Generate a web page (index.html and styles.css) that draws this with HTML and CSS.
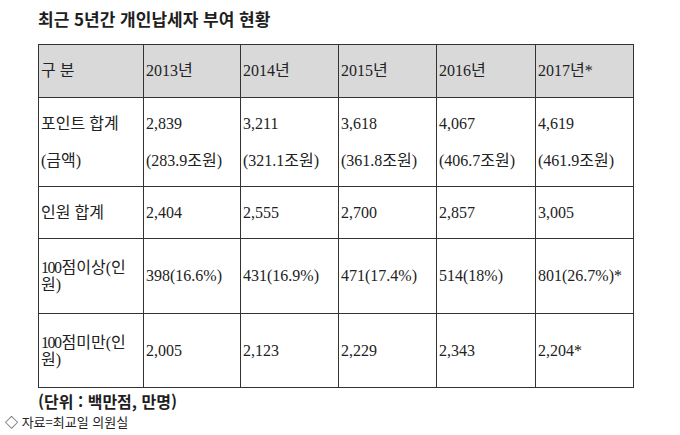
FILE: index.html
```html
<!DOCTYPE html>
<html lang="ko">
<head>
<meta charset="utf-8">
<link rel="stylesheet" href="styles.css">
</head>
<body>
<div class="page">
  <h1 class="title">최근 5년간 개인납세자 부여 현황</h1>
  <table class="grid">
    <colgroup>
      <col class="c0"><col class="c1"><col class="c2"><col class="c3"><col class="c4"><col class="c5">
    </colgroup>
    <tr class="r-head">
      <th>구 분</th><th>2013년</th><th>2014년</th><th>2015년</th><th>2016년</th><th>2017년*</th>
    </tr>
    <tr class="r-point">
      <td>포인트 합계<br>(금액)</td>
      <td>2,839<br>(283.9조원)</td>
      <td>3,211<br>(321.1조원)</td>
      <td>3,618<br>(361.8조원)</td>
      <td>4,067<br>(406.7조원)</td>
      <td>4,619<br>(461.9조원)</td>
    </tr>
    <tr class="r-total">
      <td>인원 합계</td><td>2,404</td><td>2,555</td><td>2,700</td><td>2,857</td><td>3,005</td>
    </tr>
    <tr class="r-over">
      <td class="wrap"><span class="num">100</span>점이상(인<br>원)</td>
      <td>398(16.6%)</td><td>431(16.9%)</td><td>471(17.4%)</td><td>514(18%)</td><td>801(26.7%)*</td>
    </tr>
    <tr class="r-under">
      <td class="wrap"><span class="num">100</span>점미만(인<br>원)</td>
      <td>2,005</td><td>2,123</td><td>2,229</td><td>2,343</td><td>2,204*</td>
    </tr>
  </table>
  <p class="unit">(단위 : 백만점, 만명)</p>
</div>
<p class="source">◇ 자료=최교일 의원실</p>
</body>
</html>
```

FILE: styles.css
```css
html, body {
  margin: 0;
  padding: 0;
  background: #ffffff;
}

body {
  font-family: "Liberation Serif", "Noto Sans CJK KR", serif;
  color: #222222;
}

.page {
  padding: 8px 0 0 38px;
}

.title {
  margin: 0;
  font-family: "Noto Sans CJK KR", sans-serif;
  font-size: 17px;
  font-weight: 700;
  line-height: 21px;
  color: #1e1e1e;
}

.grid {
  margin-top: 15px;
  border-collapse: collapse;
  table-layout: fixed;
  width: 595px;
  font-size: 16px;
}

.c0 { width: 105px; }
.c1 { width: 97px; }
.c2 { width: 98px; }
.c3 { width: 98px; }
.c4 { width: 99px; }
.c5 { width: 98px; }

.grid th,
.grid td {
  border: 1px solid #333333;
  padding: 0 0 0 2px;
  text-align: left;
  vertical-align: middle;
  font-weight: 400;
  line-height: 18px;
  white-space: nowrap;
  color: #222222;
}

.grid th {
  background: #d9d9d9;
}

.r-head { height: 53px; }
.r-point { height: 89px; }
.r-point td { line-height: 37px; }
.r-total { height: 52px; }
.r-over { height: 75px; }
.r-under { height: 74px; }

.grid td.wrap {
  line-height: 17px;
}

.num {
  letter-spacing: -1.5px;
  margin-right: 1px;
}

.unit {
  margin: 2px 0 0 0;
  font-family: "Noto Sans CJK KR", sans-serif;
  font-size: 16px;
  font-weight: 700;
  line-height: 22px;
  color: #1e1e1e;
}

.source {
  margin: 0 0 0 5px;
  font-family: "Noto Sans CJK KR", sans-serif;
  font-size: 13px;
  line-height: 19px;
  color: #222222;
}
```
